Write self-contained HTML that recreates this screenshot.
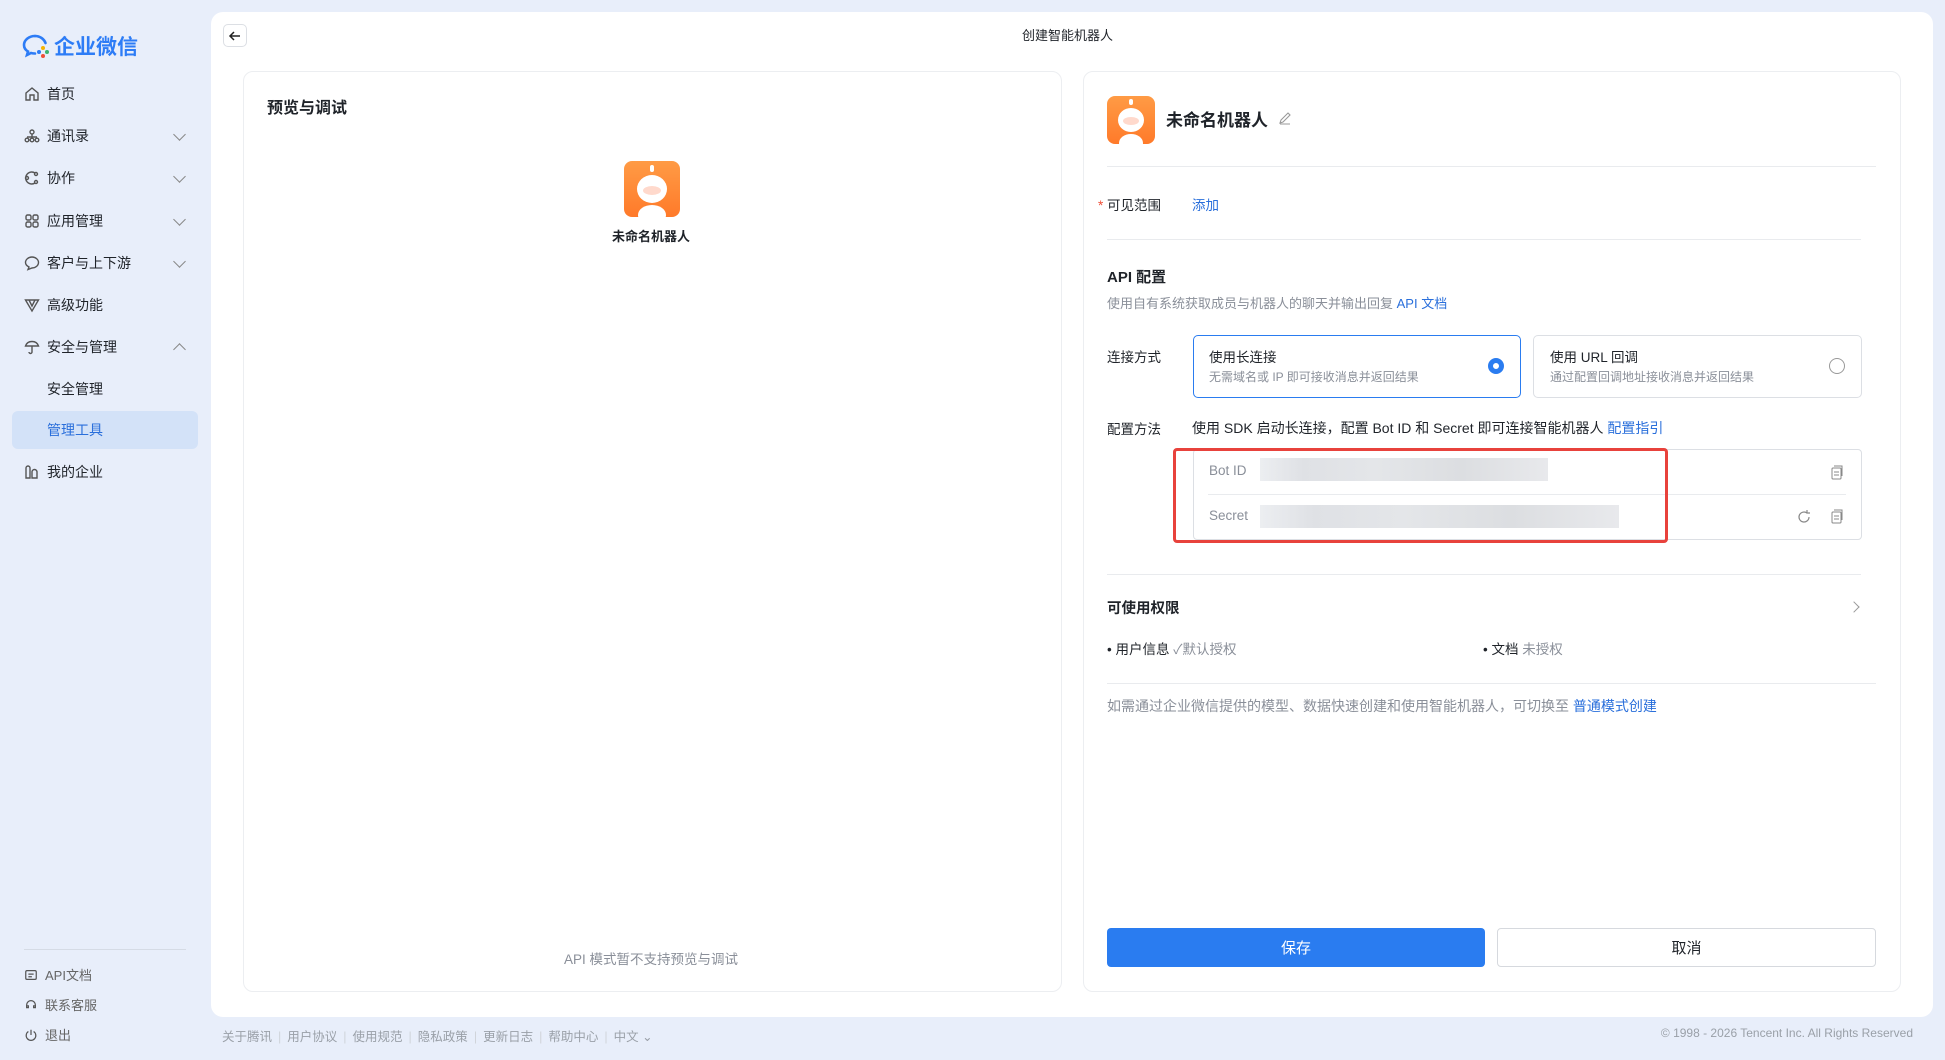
<!DOCTYPE html>
<html><head><meta charset="utf-8"><style>
*{box-sizing:border-box;margin:0;padding:0}
body{width:1945px;height:1060px;background:#e8eefa;font-family:"Liberation Sans","Noto Sans CJK SC",sans-serif;color:#1f2329;position:relative;overflow:hidden;font-size:14px}
.a{position:absolute;white-space:nowrap}
.nav{position:absolute;left:24px;font-size:14px;color:#1f2329;display:flex;align-items:center}
.nav svg{width:16px;height:16px;margin-right:7px;stroke:#555;fill:none;stroke-width:1.4}
.chev{position:absolute;left:175px;width:9px;height:9px;border-right:1.3px solid #888;border-bottom:1.3px solid #888;transform:rotate(45deg)}
.main{position:absolute;left:211px;top:12px;width:1722px;height:1005px;background:#fff;border-radius:12px}
.card{position:absolute;top:71px;height:921px;border:1px solid #eceef1;border-radius:10px;background:#fff}
.hr{position:absolute;height:1px;background:#e9ebee}
.g{color:#8a8f99}
.blue{color:#2a6fdb}
.btn{position:absolute;height:39px;border-radius:4px;display:flex;align-items:center;justify-content:center;font-size:15px}
.blur{position:absolute;height:23px;background:linear-gradient(90deg,#eceef1 0,#dfe1e5 15%,#e4e6e9 40%,#dcdee1 70%,#e8e9ec 100%)}
.robot{position:absolute;border-radius:8px;background:linear-gradient(#ff9b45,#ff7a2a);overflow:hidden}
.robot i{position:absolute;background:#fff;border-radius:50%}
.sep{color:#d0d4da;margin:0 6px}
</style></head><body>
<div class="a" style="left:22px;top:34px;width:26px;height:22px">
<svg width="28" height="24" viewBox="0 0 28 24"><path d="M13 2C7 2 2 6 2 11c0 3 1.5 5 4 6.5L5 21l4-2c1.3.4 2.6.5 4 .5" fill="none" stroke="#2d7cf6" stroke-width="2.6" stroke-linecap="round"/><path d="M13 2c5 0 9 3 10.5 7" fill="none" stroke="#2d7cf6" stroke-width="2.6" stroke-linecap="round"/><circle cx="21" cy="14" r="2" fill="#f6b400"/><circle cx="25" cy="18" r="2" fill="#3cb371"/><circle cx="21" cy="22" r="2" fill="#f04e37"/><circle cx="17" cy="18" r="2" fill="#2d7cf6"/></svg></div>
<div class="a" style="left:54px;top:31px;font-size:21px;font-weight:bold;color:#2d7cf6">企业微信</div>

<div class="nav" style="top:84px"><svg viewBox="0 0 16 16"><path d="M2 7l6-5 6 5v7H10V9H6v5H2z"/></svg>首页</div>
<div class="nav" style="top:126px"><svg viewBox="0 0 16 16"><circle cx="8" cy="4" r="2"/><circle cx="3" cy="12" r="1.8"/><circle cx="8" cy="12" r="1.8"/><circle cx="13" cy="12" r="1.8"/><path d="M3 9h10M8 6v3"/></svg>通讯录</div><div class="chev" style="top:130px"></div>
<div class="nav" style="top:168px"><svg viewBox="0 0 16 16"><path d="M11 3a6 6 0 1 0 0 10M4 8h0"/><circle cx="12" cy="4" r="1.5"/><circle cx="12" cy="12" r="1.5"/><circle cx="3" cy="8" r="1.5"/></svg>协作</div><div class="chev" style="top:172px"></div>
<div class="nav" style="top:211px"><svg viewBox="0 0 16 16"><rect x="2" y="2" width="5" height="5" rx="1.5"/><rect x="9" y="2" width="5" height="5" rx="1.5"/><rect x="2" y="9" width="5" height="5" rx="1.5"/><rect x="9" y="9" width="5" height="5" rx="1.5"/></svg>应用管理</div><div class="chev" style="top:215px"></div>
<div class="nav" style="top:253px"><svg viewBox="0 0 16 16"><path d="M8 2c3.5 0 6.5 2.5 6.5 5.5S11.5 13 8 13l-4 1.5 1-2.5C3 11 1.5 9.5 1.5 7.5 1.5 4.5 4.5 2 8 2z"/></svg>客户与上下游</div><div class="chev" style="top:257px"></div>
<div class="nav" style="top:295px"><svg viewBox="0 0 16 16"><path d="M1.5 3l6.5 11 6.5-11zM5 3l3 6 3-6"/></svg>高级功能</div>
<div class="nav" style="top:337px"><svg viewBox="0 0 16 16"><path d="M1.5 7c1-3 3.5-4.5 6.5-4.5s5.5 1.5 6.5 4.5zM8 7v6a1.5 1.5 0 0 1-3 0"/></svg>安全与管理</div><div class="chev" style="top:345px;transform:rotate(225deg)"></div>
<div class="nav" style="top:379px;left:47px">安全管理</div>
<div class="a" style="left:12px;top:411px;width:186px;height:38px;background:#d3e2f8;border-radius:6px"></div>
<div class="nav" style="top:420px;left:47px;color:#2a6fdb">管理工具</div>
<div class="nav" style="top:462px"><svg viewBox="0 0 16 16"><path d="M2 14V4a2 2 0 0 1 4 0v10zM8 14V8a2.5 2.5 0 0 1 5 0v6z"/></svg>我的企业</div>
<div class="a" style="left:24px;top:949px;width:162px;height:1px;background:#d5dbe5"></div>
<div class="nav" style="top:965px;font-size:13px;color:#666"><svg viewBox="0 0 16 16" style="width:14px"><rect x="2" y="3" width="12" height="10" rx="1.5"/><path d="M5 7h6M5 10h4"/></svg>API文档</div>
<div class="nav" style="top:995px;font-size:13px;color:#666"><svg viewBox="0 0 16 16" style="width:14px"><path d="M3 9V8a5 5 0 0 1 10 0v1M3 9v2h2V9zM11 9v2h2V9z"/></svg>联系客服</div>
<div class="nav" style="top:1025px;font-size:13px;color:#666"><svg viewBox="0 0 16 16" style="width:14px"><path d="M5 4a5.5 5.5 0 1 0 6 0M8 2v6"/></svg>退出</div>

<div class="main"></div>
<div class="a" style="left:223px;top:24px;width:24px;height:23px;border:1px solid #dcdfe4;border-radius:5px;display:flex;align-items:center;justify-content:center"><svg width="14" height="14" viewBox="0 0 14 14"><path d="M12 7H2M6 3L2 7l4 4" fill="none" stroke="#222" stroke-width="1.5"/></svg></div>
<div class="a" style="left:1022px;top:25px;font-size:13px">创建智能机器人</div>

<div class="card" style="left:243px;width:819px"></div>
<div class="a" style="left:267px;top:94px;font-size:16px;font-weight:bold">预览与调试</div>
<div class="robot" style="left:624px;top:161px;width:56px;height:56px"><i style="left:13px;top:14px;width:30px;height:28px"></i><i style="left:14px;top:44px;width:28px;height:20px"></i><i style="left:26px;top:4px;width:4px;height:7px;border-radius:2px"></i><i style="left:19px;top:25px;width:18px;height:9px;background:#ffd9cc"></i></div>
<div class="a" style="left:651px;top:226px;transform:translateX(-50%);font-size:13px;font-weight:bold">未命名机器人</div>
<div class="a g" style="left:651px;top:948px;transform:translateX(-50%);font-size:13.5px">API 模式暂不支持预览与调试</div>

<div class="card" style="left:1083px;width:818px"></div>
<div class="robot" style="left:1107px;top:96px;width:48px;height:48px"><i style="left:11px;top:12px;width:26px;height:24px"></i><i style="left:12px;top:38px;width:24px;height:18px"></i><i style="left:22px;top:3px;width:4px;height:6px;border-radius:2px"></i><i style="left:16px;top:21px;width:16px;height:8px;background:#ffd9cc"></i></div>
<div class="a" style="left:1166px;top:106px;font-size:17px;font-weight:bold">未命名机器人</div>
<svg class="a" style="left:1278px;top:111px" width="14" height="14" viewBox="0 0 14 14"><path d="M2 12l1-3 7-7 2 2-7 7zM2 13h10" fill="none" stroke="#999" stroke-width="1.1"/></svg>
<div class="hr" style="left:1107px;top:166px;width:769px"></div>
<div class="a" style="left:1098px;top:194px;font-size:13.5px"><span style="color:#f04e37">*</span> 可见范围</div>
<div class="a blue" style="left:1192px;top:194px;font-size:13.5px">添加</div>
<div class="hr" style="left:1107px;top:239px;width:754px"></div>
<div class="a" style="left:1107px;top:266px;font-size:15px;font-weight:bold">API 配置</div>
<div class="a g" style="left:1107px;top:293px;font-size:13px">使用自有系统获取成员与机器人的聊天并输出回复 <span class="blue">API 文档</span></div>
<div class="a" style="left:1107px;top:346px;font-size:13.5px">连接方式</div>
<div class="a" style="left:1193px;top:335px;width:328px;height:63px;border:1.5px solid #2a7cf0;border-radius:5px"></div>
<div class="a" style="left:1209px;top:346px;font-size:13.5px">使用长连接</div>
<div class="a g" style="left:1209px;top:368px;font-size:12px">无需域名或 IP 即可接收消息并返回结果</div>
<div class="a" style="left:1488px;top:358px;width:16px;height:16px;border-radius:50%;border:5px solid #2a7cf0;background:#fff"></div>
<div class="a" style="left:1533px;top:335px;width:329px;height:63px;border:1px solid #dcdfe4;border-radius:5px"></div>
<div class="a" style="left:1550px;top:346px;font-size:13.5px">使用 URL 回调</div>
<div class="a g" style="left:1550px;top:368px;font-size:12px">通过配置回调地址接收消息并返回结果</div>
<div class="a" style="left:1829px;top:358px;width:16px;height:16px;border-radius:50%;border:1px solid #999"></div>
<div class="a" style="left:1107px;top:418px;font-size:13.5px">配置方法</div>
<div class="a" style="left:1192px;top:418px;font-size:14px">使用 SDK 启动长连接，配置 Bot ID 和 Secret 即可连接智能机器人 <span class="blue">配置指引</span></div>
<div class="a" style="left:1193px;top:449px;width:669px;height:91px;border:1px solid #dcdfe4;border-radius:4px"></div>
<div class="hr" style="left:1208px;top:494px;width:638px"></div>
<div class="a g" style="left:1209px;top:463px;font-size:13.5px">Bot ID</div>
<div class="a g" style="left:1209px;top:508px;font-size:13.5px">Secret</div>
<div class="blur" style="left:1260px;top:458px;width:288px"></div>
<div class="blur" style="left:1260px;top:505px;width:359px"></div>
<div class="a" style="left:1173px;top:448px;width:495px;height:95px;border:3.5px solid #e8423c;border-radius:4px"></div>
<svg class="a" style="left:1830px;top:465px" width="14" height="16" viewBox="0 0 14 16"><rect x="2" y="3" width="9" height="11" rx="1" fill="none" stroke="#888"/><path d="M4 1h8v10M4 7h5M4 10h5" fill="none" stroke="#888"/></svg>
<svg class="a" style="left:1830px;top:509px" width="14" height="16" viewBox="0 0 14 16"><rect x="2" y="3" width="9" height="11" rx="1" fill="none" stroke="#888"/><path d="M4 1h8v10M4 7h5M4 10h5" fill="none" stroke="#888"/></svg>
<svg class="a" style="left:1796px;top:509px" width="16" height="16" viewBox="0 0 16 16"><path d="M13 8a5 5 0 1 1-2-4M11 1v3h3" fill="none" stroke="#888" stroke-width="1.2"/></svg>
<div class="hr" style="left:1107px;top:574px;width:754px"></div>
<div class="a" style="left:1107px;top:597px;font-size:14.5px;font-weight:bold">可使用权限</div>
<div class="a" style="left:1850px;top:603px;width:8px;height:8px;border-right:1.3px solid #999;border-top:1.3px solid #999;transform:rotate(45deg)"></div>
<div class="a" style="left:1107px;top:638px;font-size:13.5px">• 用户信息 <span class="g">✓默认授权</span></div>
<div class="a" style="left:1483px;top:638px;font-size:13.5px">• 文档 <span class="g">未授权</span></div>
<div class="hr" style="left:1107px;top:683px;width:769px"></div>
<div class="a g" style="left:1107px;top:696px;font-size:14px">如需通过企业微信提供的模型、数据快速创建和使用智能机器人，可切换至 <span class="blue">普通模式创建</span></div>
<div class="btn" style="left:1107px;top:928px;width:378px;background:#2a7cf0;color:#fff">保存</div>
<div class="btn" style="left:1497px;top:928px;width:379px;border:1px solid #d6d9de;color:#1f2329">取消</div>

<div class="a" style="left:222px;top:1026px;font-size:12.5px;color:#9aa0a8">关于腾讯<span class="sep">|</span>用户协议<span class="sep">|</span>使用规范<span class="sep">|</span>隐私政策<span class="sep">|</span>更新日志<span class="sep">|</span>帮助中心<span class="sep">|</span>中文 ⌄</div>
<div class="a" style="right:32px;top:1026px;font-size:12px;color:#9aa0a8">© 1998 - 2026 Tencent Inc. All Rights Reserved</div>
</body></html>
